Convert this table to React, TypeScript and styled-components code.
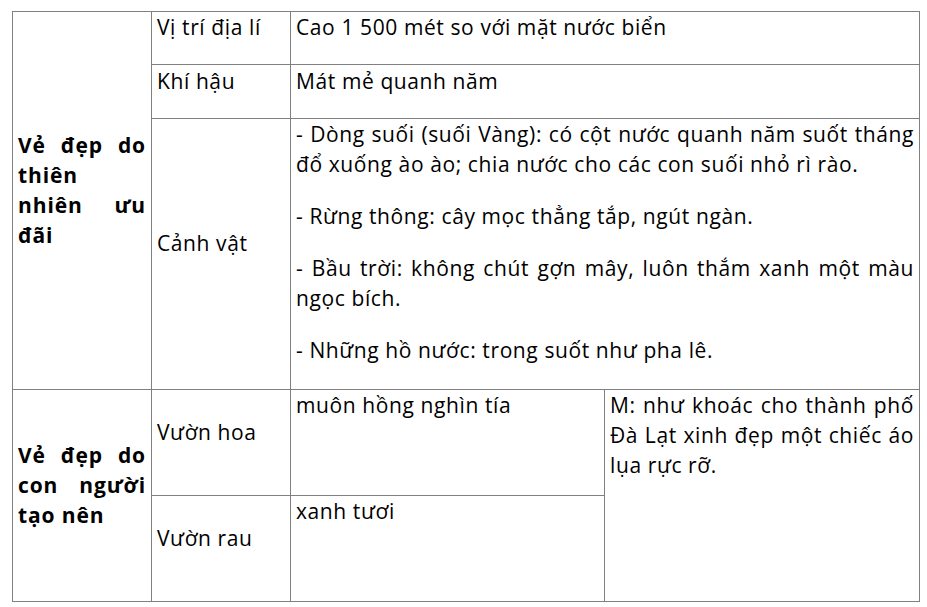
import styled, { createGlobalStyle } from "styled-components";

const GlobalStyle = createGlobalStyle`
  body {
    margin: 0;
    background: #ffffff;
    font-family: "Open Sans", "Noto Sans", sans-serif;
    color: #000000;
  }
`;

export default function App() {
  return (
    <Page>
      <GlobalStyle />
      <Table>
        <colgroup>
          <col style={{ width: 139 }} />
          <col style={{ width: 139 }} />
          <col style={{ width: 314 }} />
          <col style={{ width: 315 }} />
        </colgroup>
        <tbody>
          <Row $h={53}>
            <Cell rowSpan={3} $bold>
              <P>Vẻ đẹp do thiên nhiên ưu đãi</P>
            </Cell>
            <Cell>
              <P>Vị trí địa lí</P>
            </Cell>
            <Cell colSpan={2}>
              <P>Cao 1 500 mét so với mặt nước biển</P>
            </Cell>
          </Row>
          <Row $h={54}>
            <Cell>
              <P>Khí hậu</P>
            </Cell>
            <Cell colSpan={2}>
              <P>Mát mẻ quanh năm</P>
            </Cell>
          </Row>
          <Row $h={271}>
            <Cell>
              <P>Cảnh vật</P>
            </Cell>
            <Cell colSpan={2} $top>
              <P>
                - Dòng suối (suối Vàng): có cột nước quanh năm suốt tháng đổ
                xuống ào ào; chia nước cho các con suối nhỏ rì rào.
              </P>
              <P>- Rừng thông: cây mọc thẳng tắp, ngút ngàn.</P>
              <P>
                - Bầu trời: không chút gợn mây, luôn thắm xanh một màu ngọc
                bích.
              </P>
              <P>- Những hồ nước: trong suốt như pha lê.</P>
            </Cell>
          </Row>
          <Row $h={106}>
            <Cell rowSpan={2} $bold>
              <P>Vẻ đẹp do con người tạo nên</P>
            </Cell>
            <Cell>
              <P>Vườn hoa</P>
            </Cell>
            <Cell $top>
              <P>muôn hồng nghìn tía</P>
            </Cell>
            <Cell rowSpan={2} $top>
              <P>
                M: như khoác cho thành phố Đà Lạt xinh đẹp một chiếc áo lụa rực
                rỡ.
              </P>
            </Cell>
          </Row>
          <Row $h={106}>
            <Cell>
              <P>Vườn rau</P>
            </Cell>
            <Cell $top>
              <P>xanh tươi</P>
            </Cell>
          </Row>
        </tbody>
      </Table>
    </Page>
  );
}

const Page = styled.div`
  padding: 11px 0 0 12px;
`;

const Table = styled.table`
  width: 908px;
  border-collapse: collapse;
  table-layout: fixed;
  font-size: 21px;
  line-height: 30px;
  letter-spacing: 0.6px;
`;

const Row = styled.tr<{ $h: number }>`
  height: ${({ $h }) => $h}px;
`;

const Cell = styled.td<{ $bold?: boolean; $top?: boolean }>`
  border: 1px solid #808080;
  padding: 0 5px;
  vertical-align: ${({ $top }) => ($top ? "top" : "middle")};
  font-weight: ${({ $bold }) => ($bold ? 700 : 400)};
  letter-spacing: ${({ $bold }) => ($bold ? "0.9px" : "0.6px")};
  text-align: justify;
`;

const P = styled.p`
  margin: 0 0 22px;
`;
